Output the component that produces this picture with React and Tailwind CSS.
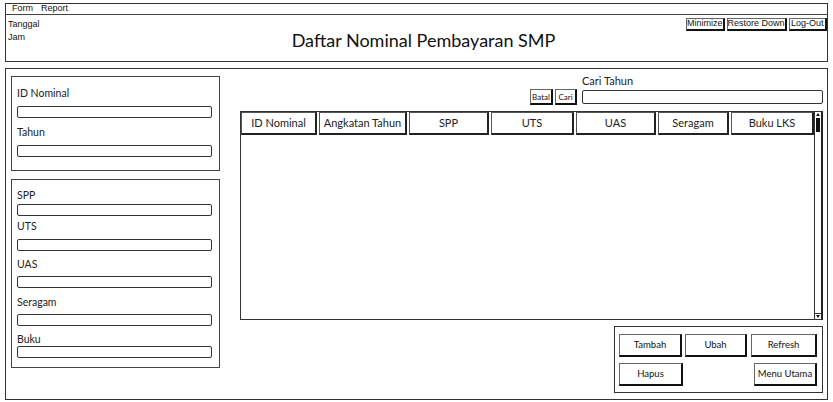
import React from 'react';

const sans = { fontFamily: 'Lato, "Open Sans", sans-serif' };
const win = { fontFamily: '"Liberation Sans", Arial, sans-serif' };

function Field({ label, gap, labelTop }) {
    return <div>
        <div className={'text-[10.5px] leading-[14px] text-[#222] ' + labelTop}>{label}</div>
        <div className={'w-[195px] h-[12px] border border-[#333] rounded-[2px] bg-white ' + gap}></div>
    </div>
}

function Btn({ children, w, h = 'h-[23px]', text = 'text-[9.5px]' }) {
    return <div className={'flex items-center justify-center whitespace-nowrap bg-white border border-[#666] border-r-2 border-b-2 border-r-[#111] border-b-[#111] text-[#111] ' + w + ' ' + h + ' ' + text}>
        {children}
    </div>
}

const columns = [
    ['ID Nominal', 'w-[76px]'],
    ['Angkatan Tahun', 'w-[88px]'],
    ['SPP', 'w-[80px]'],
    ['UTS', 'w-[83px]'],
    ['UAS', 'w-[80px]'],
    ['Seragam', 'w-[71px]'],
    ['Buku LKS', 'w-[83px]'],
];

export default function App() {
    return <div className="w-[833px] h-[402px] bg-white overflow-hidden pt-[3px]" style={sans}>

        {/* header window */}
        <div className="mx-[5px] h-[59px] border border-[#333] flex flex-col">
            <div className="h-[11px] border-b border-[#444] flex items-center gap-[8px] pl-[6px] text-[9px] text-[#111]" style={win}>
                <span>Form</span>
                <span>Report</span>
            </div>
            <div className="flex flex-1">
                <div className="w-[160px] pl-[2px] pt-[3px] text-[9px] leading-[13px] text-[#111]" style={win}>
                    <div>Tanggal</div>
                    <div>Jam</div>
                </div>
                <div className="flex-1 text-center text-[18px] text-[#111] pt-[13px] leading-[24px]">
                    Daftar Nominal Pembayaran SMP
                </div>
                <div className="w-[146px] flex gap-[2px] pt-[3px] justify-start" style={win}>
                    <Btn w="w-[40px] ml-[5px]" h="h-[13px]" text="text-[9px]">Minimize</Btn>
                    <Btn w="w-[62px]" h="h-[13px]" text="text-[9px]">Restore Down</Btn>
                    <Btn w="w-[41px]" h="h-[13px]" text="text-[9px]">Log-Out</Btn>
                </div>
            </div>
        </div>

        {/* main window */}
        <div className="mx-[5px] mt-[6px] h-[332px] border border-[#333] flex">
            <div className="ml-[5px] pt-[7px] w-[209px] flex flex-col">
                <div className="h-[95px] border border-[#444] px-[5px] pt-[9px]">
                    <Field label="ID Nominal" gap="mt-[6px]" labelTop="" />
                    <Field label="Tahun" gap="mt-[6px]" labelTop="mt-[7px]" />
                </div>
                <div className="h-[189px] mt-[8px] border border-[#444] px-[5px] pt-[8px]">
                    <Field label="SPP" gap="mt-[2px]" labelTop="" />
                    <Field label="UTS" gap="mt-[6px]" labelTop="mt-[3px]" />
                    <Field label="UAS" gap="mt-[5px]" labelTop="mt-[6px]" />
                    <Field label="Seragam" gap="mt-[5px]" labelTop="mt-[7px]" />
                    <Field label="Buku" gap="mt-[0px]" labelTop="mt-[6px]" />
                </div>
            </div>

            <div className="ml-[20px] w-[583px] flex flex-col pt-[5px]">
                <div className="flex justify-end items-end">
                    <div className="flex gap-[2px] mr-[5px] mb-[-1px]">
                        <Btn w="w-[23px]" h="h-[16px]" text="text-[8px]">Batal</Btn>
                        <Btn w="w-[22px]" h="h-[16px]" text="text-[8px]">Cari</Btn>
                    </div>
                    <div className="w-[241px]">
                        <div className="text-[11px] leading-[14px] text-[#222]">Cari Tahun</div>
                        <div className="mt-[2px] h-[14px] border border-[#333] rounded-[2px]"></div>
                    </div>
                </div>

                <div className="mt-[7px] h-[209px] border border-[#333] border-r-2 border-r-[#222] flex">
                    <div className="flex-1 flex gap-[2px] items-start">
                        {columns.map(([name, w]) =>
                            <div key={name} className={'h-[23px] flex items-center justify-center bg-white border border-[#555] border-r-2 border-b-2 border-r-[#222] border-b-[#222] text-[11px] text-[#222] whitespace-nowrap ' + w}>
                                {name}
                            </div>
                        )}
                    </div>
                    <div className="w-[7px] border-l border-[#333] flex flex-col">
                        <div className="h-[5px] flex items-center justify-center">
                            <div className="w-0 h-0 border-l-[2px] border-r-[2px] border-b-[3px] border-l-transparent border-r-transparent border-b-[#111]"></div>
                        </div>
                        <div className="h-[14px] bg-[#111] mx-[1px] mt-[1px]"></div>
                        <div className="flex-1"></div>
                        <div className="h-[6px] border-t border-[#333] flex items-center justify-center">
                            <div className="w-0 h-0 border-l-[2px] border-r-[2px] border-t-[3px] border-l-transparent border-r-transparent border-t-[#111]"></div>
                        </div>
                    </div>
                </div>

                <div className="mt-[6px] self-end w-[209px] h-[67px] border border-[#333] pl-[4px] pt-[7px]">
                    <div className="flex gap-[3px]">
                        <Btn w="w-[63px]">Tambah</Btn>
                        <Btn w="w-[62px]">Ubah</Btn>
                        <Btn w="w-[66px] ml-[1px]">Refresh</Btn>
                    </div>
                    <div className="flex justify-between mt-[6px] w-[198px]">
                        <Btn w="w-[64px]">Hapus</Btn>
                        <Btn w="w-[63px]">Menu Utama</Btn>
                    </div>
                </div>
            </div>
        </div>
    </div>
}
